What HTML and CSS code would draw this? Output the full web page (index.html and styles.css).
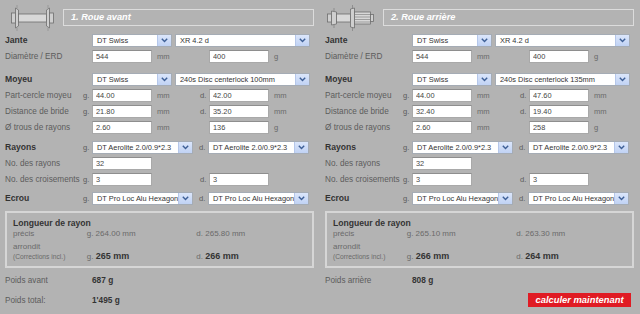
FILE: index.html
```html
<!DOCTYPE html>
<html>
<head>
<meta charset="utf-8">
<title>Calculateur de rayons</title>
<link rel="stylesheet" href="styles.css">
</head>
<body>
<div class="page">

<!-- roue avant -->
<div class="wheel">
  <div class="head">
    <svg class="hub" width="52" height="26" viewBox="0 0 52 26">
      <g fill="#cfcfcf" stroke="#6e6e6e" stroke-width="0.8">
        <rect x="6.5" y="8" width="4" height="10"/>
        <path d="M10.5 3 L13.5 5 L13.5 21 L10.5 23 Z"/>
        <rect x="13.5" y="9" width="28" height="8" fill="#d8d8d8"/>
        <path d="M41.5 5 L44.5 3 L44.5 23 L41.5 21 Z"/>
        <rect x="44.5" y="8" width="4" height="10"/>
      </g>
      <g stroke="#8a8a8a" stroke-width="0.6">
        <line x1="12" y1="0" x2="12" y2="3"/>
        <line x1="12" y1="23" x2="12" y2="26"/>
        <line x1="43" y1="0" x2="43" y2="3"/>
        <line x1="43" y1="23" x2="43" y2="26"/>
      </g>
    </svg>
    <div class="title">1. Roue avant</div>
  </div>

  <div class="group">
    <div class="row">
      <span class="lbl main">Jante</span><span class="pre"></span>
      <div class="sel w80"><span class="val">DT Swiss</span><span class="arr"><svg width="7" height="5" viewBox="0 0 7 5"><path d="M0.8 0.8 L3.5 3.6 L6.2 0.8" fill="none" stroke="#3d5f96" stroke-width="1.4"/></svg></span></div>
      <div class="sel w135"><span class="val">XR 4.2 d</span><span class="arr"><svg width="7" height="5" viewBox="0 0 7 5"><path d="M0.8 0.8 L3.5 3.6 L6.2 0.8" fill="none" stroke="#3d5f96" stroke-width="1.4"/></svg></span></div>
    </div>
    <div class="row">
      <span class="lbl">Diamètre / ERD</span><span class="pre"></span>
      <input class="inp" type="text" value="544"><span class="unit">mm</span>
      <span class="pre"></span><input class="inp" type="text" value="400"><span class="unit">g</span>
    </div>
  </div>

  <div class="group g-moyeu">
    <div class="row">
      <span class="lbl main">Moyeu</span><span class="pre"></span>
      <div class="sel w80"><span class="val">DT Swiss</span><span class="arr"><svg width="7" height="5" viewBox="0 0 7 5"><path d="M0.8 0.8 L3.5 3.6 L6.2 0.8" fill="none" stroke="#3d5f96" stroke-width="1.4"/></svg></span></div>
      <div class="sel w135"><span class="val">240s Disc centerlock 100mm</span><span class="arr"><svg width="7" height="5" viewBox="0 0 7 5"><path d="M0.8 0.8 L3.5 3.6 L6.2 0.8" fill="none" stroke="#3d5f96" stroke-width="1.4"/></svg></span></div>
    </div>
    <div class="row">
      <span class="lbl">Part-cercle moyeu</span><span class="pre">g.</span>
      <input class="inp" type="text" value="44.00"><span class="unit">mm</span>
      <span class="pre">d.</span><input class="inp" type="text" value="42.00"><span class="unit">mm</span>
    </div>
    <div class="row">
      <span class="lbl">Distance de bride</span><span class="pre">g.</span>
      <input class="inp" type="text" value="21.80"><span class="unit">mm</span>
      <span class="pre">d.</span><input class="inp" type="text" value="35.20"><span class="unit">mm</span>
    </div>
    <div class="row">
      <span class="lbl">Ø trous de rayons</span><span class="pre"></span>
      <input class="inp" type="text" value="2.60"><span class="unit">mm</span>
      <span class="pre"></span><input class="inp" type="text" value="136"><span class="unit">g</span>
    </div>
  </div>

  <div class="group g-rayons">
    <div class="row">
      <span class="lbl main">Rayons</span><span class="pre">g.</span>
      <div class="sel w101"><span class="val">DT Aerolite 2.0/0.9*2.3</span><span class="arr"><svg width="7" height="5" viewBox="0 0 7 5"><path d="M0.8 0.8 L3.5 3.6 L6.2 0.8" fill="none" stroke="#3d5f96" stroke-width="1.4"/></svg></span></div>
      <span class="pre d">d.</span>
      <div class="sel w101"><span class="val">DT Aerolite 2.0/0.9*2.3</span><span class="arr"><svg width="7" height="5" viewBox="0 0 7 5"><path d="M0.8 0.8 L3.5 3.6 L6.2 0.8" fill="none" stroke="#3d5f96" stroke-width="1.4"/></svg></span></div>
    </div>
    <div class="row">
      <span class="lbl">No. des rayons</span><span class="pre"></span>
      <input class="inp" type="text" value="32">
    </div>
    <div class="row">
      <span class="lbl">No. des croisements</span><span class="pre">g.</span>
      <input class="inp" type="text" value="3"><span class="unit"></span>
      <span class="pre">d.</span><input class="inp" type="text" value="3">
    </div>
  </div>

  <div class="group g-ecrou">
    <div class="row">
      <span class="lbl main">Ecrou</span><span class="pre">g.</span>
      <div class="sel w101"><span class="val">DT Pro Loc Alu Hexagon</span><span class="arr"><svg width="7" height="5" viewBox="0 0 7 5"><path d="M0.8 0.8 L3.5 3.6 L6.2 0.8" fill="none" stroke="#3d5f96" stroke-width="1.4"/></svg></span></div>
      <span class="pre d">d.</span>
      <div class="sel w101"><span class="val">DT Pro Loc Alu Hexagon</span><span class="arr"><svg width="7" height="5" viewBox="0 0 7 5"><path d="M0.8 0.8 L3.5 3.6 L6.2 0.8" fill="none" stroke="#3d5f96" stroke-width="1.4"/></svg></span></div>
    </div>
  </div>

  <div class="result">
    <div class="res-title">Longueur de rayon</div>
    <div class="res-row">
      <span class="res-lbl">précis</span>
      <span class="res-val">g. 264.00 mm</span>
      <span class="res-val">d. 265.80 mm</span>
    </div>
    <div class="res-row round">
      <span class="res-lbl">arrondit<br><small>(Corrections incl.)</small></span>
      <span class="res-val">g. <b>265 mm</b></span>
      <span class="res-val">d. <b>266 mm</b></span>
    </div>
  </div>

  <div class="weight">
    <span class="lbl">Poids avant</span><b>687 g</b>
  </div>
  <div class="weight total">
    <span class="lbl">Poids total:</span><b>1'495 g</b>
  </div>
</div>

<!-- roue arrière -->
<div class="wheel">
  <div class="head">
    <svg class="hub" width="52" height="26" viewBox="0 0 52 26">
      <g fill="#cfcfcf" stroke="#6e6e6e" stroke-width="0.8">
        <rect x="2.5" y="9" width="4" height="8"/>
        <path d="M6.5 6 L11.5 7 L11.5 19 L6.5 20 Z"/>
        <rect x="11.5" y="9" width="14" height="8" fill="#d8d8d8"/>
        <path d="M25.5 4 L29.5 3 L29.5 23 L25.5 22 Z"/>
        <rect x="29.5" y="7" width="16" height="12" fill="#d8d8d8"/>
        <rect x="45.5" y="9.5" width="3" height="7"/>
      </g>
      <g stroke="#777" stroke-width="0.6">
        <line x1="30" y1="9.5" x2="45" y2="9.5"/>
        <line x1="30" y1="12" x2="45" y2="12"/>
        <line x1="30" y1="14.5" x2="45" y2="14.5"/>
        <line x1="30" y1="17" x2="45" y2="17"/>
        <line x1="9" y1="3" x2="9" y2="6"/>
        <line x1="9" y1="20" x2="9" y2="23"/>
        <line x1="27.5" y1="0" x2="27.5" y2="3"/>
        <line x1="27.5" y1="23" x2="27.5" y2="26"/>
      </g>
    </svg>
    <div class="title">2. Roue arrière</div>
  </div>

  <div class="group">
    <div class="row">
      <span class="lbl main">Jante</span><span class="pre"></span>
      <div class="sel w80"><span class="val">DT Swiss</span><span class="arr"><svg width="7" height="5" viewBox="0 0 7 5"><path d="M0.8 0.8 L3.5 3.6 L6.2 0.8" fill="none" stroke="#3d5f96" stroke-width="1.4"/></svg></span></div>
      <div class="sel w135"><span class="val">XR 4.2 d</span><span class="arr"><svg width="7" height="5" viewBox="0 0 7 5"><path d="M0.8 0.8 L3.5 3.6 L6.2 0.8" fill="none" stroke="#3d5f96" stroke-width="1.4"/></svg></span></div>
    </div>
    <div class="row">
      <span class="lbl">Diamètre / ERD</span><span class="pre"></span>
      <input class="inp" type="text" value="544"><span class="unit">mm</span>
      <span class="pre"></span><input class="inp" type="text" value="400"><span class="unit">g</span>
    </div>
  </div>

  <div class="group g-moyeu">
    <div class="row">
      <span class="lbl main">Moyeu</span><span class="pre"></span>
      <div class="sel w80"><span class="val">DT Swiss</span><span class="arr"><svg width="7" height="5" viewBox="0 0 7 5"><path d="M0.8 0.8 L3.5 3.6 L6.2 0.8" fill="none" stroke="#3d5f96" stroke-width="1.4"/></svg></span></div>
      <div class="sel w135"><span class="val">240s Disc centerlock 135mm</span><span class="arr"><svg width="7" height="5" viewBox="0 0 7 5"><path d="M0.8 0.8 L3.5 3.6 L6.2 0.8" fill="none" stroke="#3d5f96" stroke-width="1.4"/></svg></span></div>
    </div>
    <div class="row">
      <span class="lbl">Part-cercle moyeu</span><span class="pre">g.</span>
      <input class="inp" type="text" value="44.00"><span class="unit">mm</span>
      <span class="pre">d.</span><input class="inp" type="text" value="47.60"><span class="unit">mm</span>
    </div>
    <div class="row">
      <span class="lbl">Distance de bride</span><span class="pre">g.</span>
      <input class="inp" type="text" value="32.40"><span class="unit">mm</span>
      <span class="pre">d.</span><input class="inp" type="text" value="19.40"><span class="unit">mm</span>
    </div>
    <div class="row">
      <span class="lbl">Ø trous de rayons</span><span class="pre"></span>
      <input class="inp" type="text" value="2.60"><span class="unit">mm</span>
      <span class="pre"></span><input class="inp" type="text" value="258"><span class="unit">g</span>
    </div>
  </div>

  <div class="group g-rayons">
    <div class="row">
      <span class="lbl main">Rayons</span><span class="pre">g.</span>
      <div class="sel w101"><span class="val">DT Aerolite 2.0/0.9*2.3</span><span class="arr"><svg width="7" height="5" viewBox="0 0 7 5"><path d="M0.8 0.8 L3.5 3.6 L6.2 0.8" fill="none" stroke="#3d5f96" stroke-width="1.4"/></svg></span></div>
      <span class="pre d">d.</span>
      <div class="sel w101"><span class="val">DT Aerolite 2.0/0.9*2.3</span><span class="arr"><svg width="7" height="5" viewBox="0 0 7 5"><path d="M0.8 0.8 L3.5 3.6 L6.2 0.8" fill="none" stroke="#3d5f96" stroke-width="1.4"/></svg></span></div>
    </div>
    <div class="row">
      <span class="lbl">No. des rayons</span><span class="pre"></span>
      <input class="inp" type="text" value="32">
    </div>
    <div class="row">
      <span class="lbl">No. des croisements</span><span class="pre">g.</span>
      <input class="inp" type="text" value="3"><span class="unit"></span>
      <span class="pre">d.</span><input class="inp" type="text" value="3">
    </div>
  </div>

  <div class="group g-ecrou">
    <div class="row">
      <span class="lbl main">Ecrou</span><span class="pre">g.</span>
      <div class="sel w101"><span class="val">DT Pro Loc Alu Hexagon</span><span class="arr"><svg width="7" height="5" viewBox="0 0 7 5"><path d="M0.8 0.8 L3.5 3.6 L6.2 0.8" fill="none" stroke="#3d5f96" stroke-width="1.4"/></svg></span></div>
      <span class="pre d">d.</span>
      <div class="sel w101"><span class="val">DT Pro Loc Alu Hexagon</span><span class="arr"><svg width="7" height="5" viewBox="0 0 7 5"><path d="M0.8 0.8 L3.5 3.6 L6.2 0.8" fill="none" stroke="#3d5f96" stroke-width="1.4"/></svg></span></div>
    </div>
  </div>

  <div class="result">
    <div class="res-title">Longueur de rayon</div>
    <div class="res-row">
      <span class="res-lbl">précis</span>
      <span class="res-val">g. 265.10 mm</span>
      <span class="res-val">d. 263.30 mm</span>
    </div>
    <div class="res-row round">
      <span class="res-lbl">arrondit<br><small>(Corrections incl.)</small></span>
      <span class="res-val">g. <b>266 mm</b></span>
      <span class="res-val">d. <b>264 mm</b></span>
    </div>
  </div>

  <div class="weight">
    <span class="lbl">Poids arrière</span><b>808 g</b>
  </div>
  <div class="actions">
    <a class="btn" href="#">calculer maintenant</a>
  </div>
</div>

</div>
</body>
</html>
```

FILE: styles.css
```css
/* Calculateur de rayons */

body
{ margin: 0;
background-color: #b3b3b3;
font-family: "Liberation Sans", Arial, sans-serif;
color: #5c5c5c;
}

div.page
{ display: grid;
grid-template-columns: 320px 320px;
width: 640px;
height: 314px;
overflow: hidden;
}

div.wheel
{ padding: 9px 6px 0 5px;
}

/* Header */

div.head
{ display: flex;
align-items: center;
height: 17px;
margin-bottom: 6px;
}

svg.hub
{ flex: none;
margin-right: 6px;
}

div.title
{ flex: 1;
height: 17px;
box-sizing: border-box;
border: 1px solid #dcdcdc;
padding-left: 7px;
line-height: 15px;
font-size: 9.2px;
font-weight: bold;
font-style: italic;
color: #fff;
}

/* Rows */

div.g-moyeu { margin-top: 7px; }
div.g-rayons { margin-top: 4px; }
div.g-ecrou { margin-top: 3px; }

div.row
{ display: flex;
align-items: center;
height: 16px;
}

span.lbl
{ flex: none;
width: 78px;
font-size: 8.2px;
white-space: nowrap;
}

span.lbl.main
{ font-size: 8.6px;
font-weight: bold;
color: #333;
}

span.pre
{ flex: none;
width: 9px;
font-size: 7.6px;
color: #5c5c5c;
}

span.pre.d
{ margin-left: 6px;
}

span.unit
{ flex: none;
width: 43px;
padding-left: 5px;
font-size: 7.6px;
color: #6a6a6a;
}

input.inp
{ flex: none;
width: 60px;
height: 13px;
box-sizing: border-box;
margin: 0;
padding: 0 3px;
border: 1px solid #a9a9a9;
border-top-color: #8e8e8e;
background: #fff;
font-family: "Liberation Sans", Arial, sans-serif;
font-size: 7.4px;
color: #444;
outline: none;
}

/* Selects */

div.sel
{ flex: none;
display: flex;
height: 13px;
box-sizing: border-box;
border: 1px solid #a5acb5;
background: #fff;
}

div.sel.w80 { width: 80px; margin-right: 3px; }
div.sel.w135 { width: 135px; }
div.sel.w101 { width: 101px; }

span.val
{ flex: 1;
overflow: hidden;
white-space: nowrap;
padding-left: 4px;
line-height: 11px;
font-size: 7.4px;
color: #333;
}

span.arr
{ flex: none;
display: flex;
align-items: center;
justify-content: center;
width: 13px;
background: linear-gradient(#dbe6fb, #c0d2f4);
border-left: 1px solid #b5c7ea;
}

/* Result box */

div.result
{ margin-top: 5px;
height: 57px;
box-sizing: border-box;
border: 2px solid #d6d6d6;
padding: 5px 6px 0 6px;
}

div.res-title
{ height: 11px;
line-height: 11px;
font-size: 8.6px;
font-weight: bold;
color: #333;
}

div.res-row
{ display: flex;
align-items: flex-end;
line-height: 10px;
font-size: 8px;
}

div.res-row.round
{ margin-top: 3px;
}

span.res-lbl
{ width: 78px;
color: #6a6a6a;
}

span.res-lbl small
{ font-size: 6.7px;
}

span.res-val
{ width: 116px;
color: #6a6a6a;
}

span.res-val b
{ font-size: 9px;
color: #333;
}

/* Weights */

div.weight
{ display: flex;
align-items: center;
height: 12px;
margin-top: 6px;
}

div.weight b
{ font-size: 8.3px;
color: #333;
margin-left: 9px;
}

div.weight.total
{ margin-top: 8px;
}

div.actions
{ display: flex;
justify-content: flex-end;
margin-top: 7px;
margin-right: 3px;
}

a.btn
{ display: block;
width: 103px;
height: 14px;
line-height: 14px;
text-align: center;
background-color: #e01b24;
color: #fff;
font-size: 9.4px;
font-weight: bold;
font-style: italic;
text-decoration: none;
}
```
